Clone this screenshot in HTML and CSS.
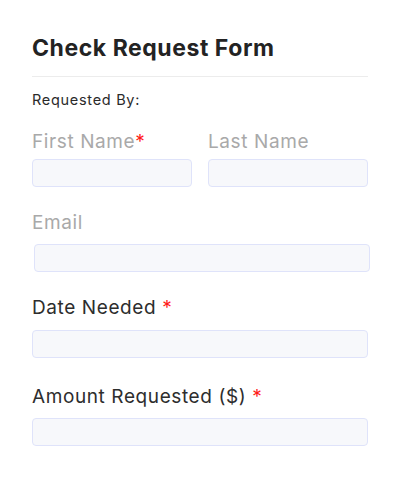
FILE: index.html
```html
<!DOCTYPE html>
<html>
<head>
<meta charset="utf-8">
<link rel="stylesheet" href="styles.css">
</head>
<body>
<form class="form">
  <h1 class="title">Check Request Form</h1>
  <p class="section">Requested By:</p>
  <div class="name-row">
    <div class="field">
      <label class="label label-muted">First Name<span class="req-tight">*</span></label>
      <div class="input"></div>
    </div>
    <div class="field">
      <label class="label label-muted">Last Name</label>
      <div class="input"></div>
    </div>
  </div>
  <div class="field field-email">
    <label class="label label-muted">Email</label>
    <div class="input input-email"></div>
  </div>
  <div class="field field-date">
    <label class="label">Date Needed <span class="req">*</span></label>
    <div class="input"></div>
  </div>
  <div class="field field-amount">
    <label class="label">Amount Requested ($) <span class="req">*</span></label>
    <div class="input"></div>
  </div>
</form>
</body>
</html>
```

FILE: styles.css
```css
html, body {
  margin: 0;
  padding: 0;
  background: #ffffff;
}
body {
  font-family: Inter, "Noto Sans", sans-serif;
  color: #2a2a2a;
}
.form {
  width: 336px;
  padding: 34px 32px 0 32px;
  display: flex;
  flex-direction: column;
}
.title {
  margin: 0;
  font-size: 23px;
  line-height: 28px;
  font-weight: 700;
  letter-spacing: 0.55px;
  color: #232323;
  padding-bottom: 14px;
  border-bottom: 1px solid #ececec;
}
.section {
  margin: 13px 0 0 0;
  font-size: 14.5px;
  line-height: 20px;
  letter-spacing: 0.7px;
  color: #2a2a2a;
}
.name-row {
  display: grid;
  grid-template-columns: 1fr 1fr;
  column-gap: 16px;
  margin-top: 20px;
}
.field {
  display: flex;
  flex-direction: column;
}
.label {
  font-size: 19px;
  line-height: 24px;
  letter-spacing: 0.6px;
  color: #2d2d2d;
  margin-bottom: 5px;
}
.label-muted {
  color: #a9a9a9;
}
.req, .req-tight {
  color: #ff1a1a;
}
.input {
  height: 28px;
  box-sizing: border-box;
  background: #f7f8fb;
  border: 1px solid #dfe3fa;
  border-radius: 4px;
}
.field-email {
  margin-top: 24px;
}
.field-email .label {
  margin-bottom: 9px;
}
.input-email {
  margin-left: 2px;
  margin-right: -2px;
}
.field-date {
  margin-top: 24px;
}
.field-date .label {
  margin-bottom: 10px;
}
.field-amount {
  margin-top: 27px;
}
.field-amount .label {
  margin-bottom: 9px;
}
```
